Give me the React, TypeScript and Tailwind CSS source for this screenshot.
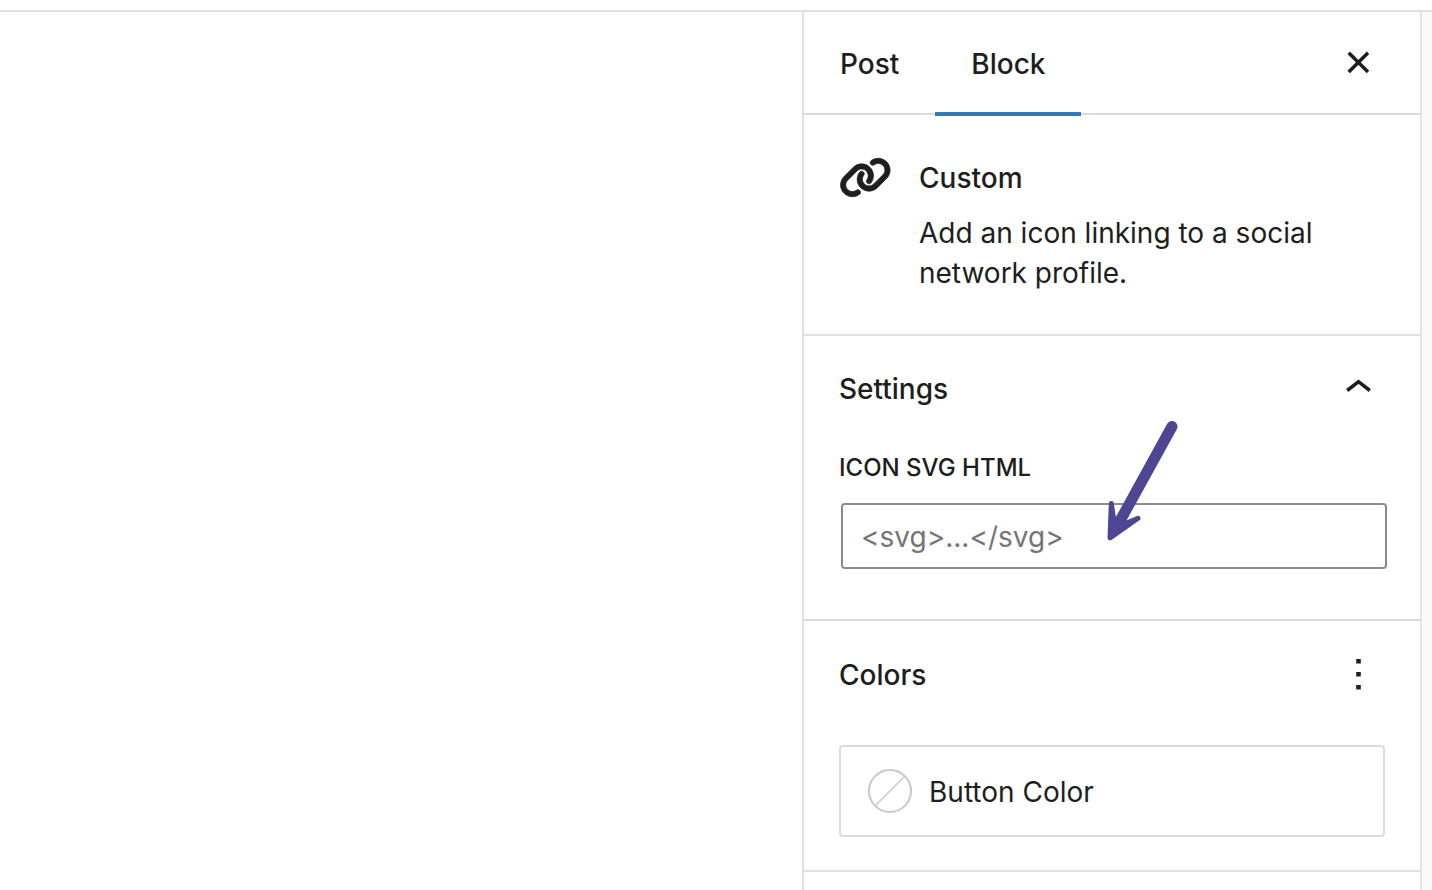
import { FaLink } from "react-icons/fa6";

function CloseIcon() {
  return (
    <svg width="24" height="24" viewBox="0 0 24 24" fill="none" stroke="currentColor" strokeWidth="3.5" aria-hidden="true">
      <path d="M2.7 1.7 22 21M22 1.700 2.700 21" />
    </svg>
  );
}

function ChevronUpIcon() {
  return (
    <svg width="26" height="22" viewBox="0 0 26 22" fill="none" stroke="currentColor" strokeWidth="3.5" aria-hidden="true">
      <path d="M2.200 12.500 13.500 3.700 24.800 12.500" />
    </svg>
  );
}

function MoreIcon() {
  return (
    <svg width="24" height="32" viewBox="0 0 24 32" fill="currentColor" aria-hidden="true">
      <path d="M9.200 0h4.600v4.600h-4.600zM9.200 13h4.600v4.600h-4.600zM9.200 26h4.600v4.600h-4.600z" />
    </svg>
  );
}

function Arrow() {
  return (
    <svg
      className="pointer-events-none absolute -top-[82px] left-[264px]"
      width="74"
      height="124"
      viewBox="0 0 74 124"
      fill="#4f4592"
      stroke="#4f4592"
      strokeLinecap="round"
      strokeLinejoin="round"
      aria-hidden="true"
    >
      <path d="M67 5.500 15.500 99" strokeWidth="11" />
      <path d="M6.300 82.500 5 117 33 97.300 17 104 8.500 97Z" strokeWidth="5" />
    </svg>
  );
}

export default function App() {
  return (
    <div className="flex min-h-screen flex-col bg-white font-['Inter','Liberation_Sans',sans-serif] text-[28px] leading-10 text-[#1e1e1e]">
      <header className="h-3 border-b-2 border-[#e0e0e0]" />
      <div className="flex flex-1">
        <main className="flex-1" />
        <aside className="w-[618px] border-l-2 border-[#e0e0e0]">
          <div className="flex h-[103px] items-stretch border-b-2 border-[#dcdcde]">
            <button type="button" className="px-9 pt-0.5 font-medium">
              Post
            </button>
            <button
              type="button"
              className="relative px-9 pt-0.5 font-medium after:absolute after:inset-x-0 after:-bottom-[3px] after:h-1 after:bg-[#337ab7]"
            >
              Block
            </button>
            <button type="button" aria-label="Close settings" className="mr-[50px] ml-auto">
              <CloseIcon />
            </button>
          </div>

          <section className="flex h-[221px] gap-7 border-b-2 border-[#e0e0e0] px-[35px] pt-[43px]">
            <FaLink className="h-10 w-[52px] shrink-0 overflow-visible" viewBox="8 18 616 488" stroke="currentColor" strokeWidth="9" aria-hidden="true" />
            <div>
              <h2 className="font-medium">Custom</h2>
              <p className="mt-[15px]">Add an icon linking to a social network profile.</p>
            </div>
          </section>

          <section className="h-[285px] border-b-2 border-[#dcdcde] px-[35px] pt-[33px]">
            <h2>
              <button type="button" className="flex w-full items-center justify-between pr-[14px] font-medium">
                Settings
                <ChevronUpIcon />
              </button>
            </h2>
            <label htmlFor="icon-svg" className="mt-[41px] block text-2xl leading-9 font-medium uppercase">
              Icon SVG HTML
            </label>
            <div className="relative mt-[17px] -mr-0.5 ml-0.5">
              <input
                id="icon-svg"
                type="text"
                placeholder="<svg>...</svg>"
                className="block h-[66px] w-full rounded border-2 border-[#8c8c8c] bg-white px-[18px] pt-0.5 placeholder:text-[#757575]"
              />
              <Arrow />
            </div>
          </section>

          <section className="h-[251px] border-b-2 border-[#e0e0e0] px-[35px] pt-[34px]">
            <div className="flex items-center justify-between pr-[14px]">
              <h2 className="font-medium">Colors</h2>
              <button type="button" aria-label="Colors options">
                <MoreIcon />
              </button>
            </div>
            <button
              type="button"
              className="mt-[50px] flex h-[92px] w-full items-center gap-[17px] rounded border-2 border-[#dcdcdc] px-[27px]"
            >
              <svg width="44" height="44" viewBox="0 0 44 44" fill="none" stroke="#c8c8c8" aria-hidden="true">
                <circle cx="22" cy="22" r="21" strokeWidth="2" />
                <path d="M7 37 37 7" strokeWidth="1.500" />
              </svg>
              <span className="pt-0.5">Button Color</span>
            </button>
          </section>
        </aside>
        <div className="w-3 border-l-2 border-[#e4e4e4] bg-[#fafafa]" />
      </div>
    </div>
  );
}
